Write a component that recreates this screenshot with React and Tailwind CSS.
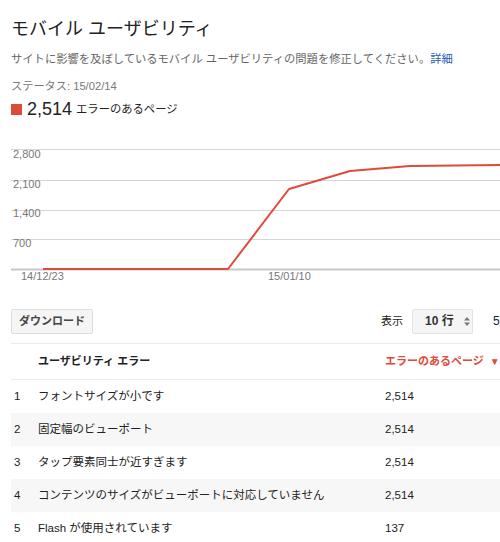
const rows = [
  { n: 1, label: 'フォントサイズが小です', count: '2,514' },
  { n: 2, label: '固定幅のビューポート', count: '2,514' },
  { n: 3, label: 'タップ要素同士が近すぎます', count: '2,514' },
  { n: 4, label: 'コンテンツのサイズがビューポートに対応していません', count: '2,514' },
  { n: 5, label: 'Flash が使用されています', count: '137' },
]

function Chart() {
  const grid = [9, 40, 70, 99]
  const labels = [
    { y: 18, t: '2,800' },
    { y: 48, t: '2,100' },
    { y: 77, t: '1,400' },
    { y: 107, t: '700' },
  ]
  return (
    <svg width="489" height="150" viewBox="0 0 489 150" className="block">
      {grid.map(y => (
        <line key={y} x1="0" x2="489" y1={y + 0.5} y2={y + 0.5} stroke="#d6d6d6" strokeWidth="1" />
      ))}
      <line x1="0" x2="489" y1="129.5" y2="129.5" stroke="#c8c8c8" strokeWidth="2" />
      {labels.map(l => (
        <text key={l.t} x="2" y={l.y} fontSize="11" fill="#777" fontFamily="'Liberation Sans', Arial, sans-serif">{l.t}</text>
      ))}
      <polyline
        points="32,129 217,129 278,49 339,31 399,26 489,25"
        fill="none"
        stroke="#dd4b39"
        strokeWidth="2"
        strokeLinejoin="round"
      />
      <text x="10" y="140" fontSize="11" fill="#777" fontFamily="'Liberation Sans', Arial, sans-serif">14/12/23</text>
      <text x="257" y="140" fontSize="11" fill="#777" fontFamily="'Liberation Sans', Arial, sans-serif">15/01/10</text>
    </svg>
  )
}

export default function App() {
  return (
    <div
      className="w-[500px] h-[542px] overflow-hidden bg-white text-[#222]"
      style={{ fontFamily: "'Liberation Sans', 'Noto Sans CJK JP', sans-serif" }}
    >
      {/* Header */}
      <div className="pl-[11px] pt-[17px]">
        <h1 className="text-[18px] leading-[24px] text-[#222]">モバイル ユーザビリティ</h1>
        <p className="mt-[10px] text-[11.3px] leading-[16px] text-[#666]">
          サイトに影響を及ぼしているモバイル ユーザビリティの問題を修正してください。<span className="text-[#2a5db0]">詳細</span>
        </p>
        <p className="mt-[11px] text-[11.2px] leading-[16px] text-[#777]">ステータス: 15/02/14</p>
        <div className="mt-[4px] flex items-center h-[22px]">
          <span className="w-[11px] h-[11px] bg-[#dd4b39] mr-[5px]" />
          <span className="text-[18px] leading-[22px] text-[#222]">2,514</span>
          <span className="ml-[4px] text-[11.3px] text-[#222]">エラーのあるページ</span>
        </div>
      </div>

      {/* Chart */}
      <div className="pl-[11px] mt-[20px]">
        <Chart />
      </div>

      {/* Controls */}
      <div className="pl-[11px] mt-[18px] flex items-center h-[26px]">
        <button className="h-[25px] w-[82px] border border-[#ddd] bg-[#f5f5f5] rounded-[2px] text-[11px] font-bold text-[#444]">
          ダウンロード
        </button>
        <div className="ml-auto flex items-center">
          <span className="text-[11px] text-[#222]">表示</span>
          <div className="ml-[9px] h-[25px] w-[61px] border border-[#e2e2e2] bg-[#f5f5f5] rounded-[2px] flex items-center pl-[12px] text-[12px] font-bold text-[#333]">
            10 行
            <svg width="6" height="9" viewBox="0 0 6 9" className="ml-[10px]">
              <path d="M0 3.5 L3 0 L6 3.5 Z M0 5.5 L3 9 L6 5.5 Z" fill="#777" />
            </svg>
          </div>
          <span className="ml-[20px] w-[7px] text-[12px] overflow-hidden">5</span>
        </div>
      </div>

      {/* Table */}
      <div className="ml-[11px] mt-[9px] w-[540px] border-t border-[#ebebeb]">
        <div className="flex items-center h-[36px] border-b border-[#ebebeb] text-[11px] font-bold">
          <span className="w-[27px]" />
          <span className="w-[347px] text-[#222]">ユーザビリティ エラー</span>
          <span className="text-[#dd4b39] whitespace-nowrap">エラーのあるページ <span className="ml-[3px] text-[10px]">▼</span></span>
        </div>
        {rows.map(r => (
          <div
            key={r.n}
            className={`flex items-center h-[33px] text-[11.5px] text-[#222] ${r.n % 2 === 0 ? 'bg-[#f7f7f7]' : 'bg-white'}`}
          >
            <span className="w-[27px] pl-[3px]">{r.n}</span>
            <span className="w-[347px]">{r.label}</span>
            <span>{r.count}</span>
          </div>
        ))}
      </div>
    </div>
  )
}
